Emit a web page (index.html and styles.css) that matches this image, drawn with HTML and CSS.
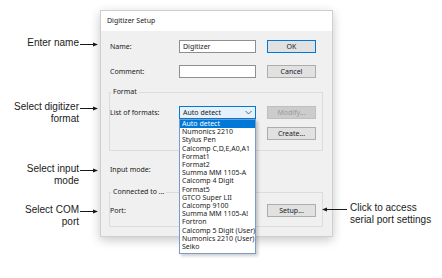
FILE: index.html
```html
<!DOCTYPE html>
<html lang="en">
<head>
    <meta charset="UTF-8">
    <title>Digitizer Setup</title>
    <link rel="stylesheet" href="styles.css">
</head>
<body>

<div class="page">
    <div class="callouts-left">
        <div class="callout callout-name">
            <span class="callout-text">Enter name</span>
            <svg class="arrow" width="20" height="12" viewBox="0 0 20 12"><line x1="0" y1="7.5" x2="15" y2="7.5" stroke="#1a1a1a" stroke-width="1"/><path d="M13 5.5 L18 7.5 L13 9.5 Z" fill="#1a1a1a"/></svg>
        </div>
        <div class="callout callout-format">
            <span class="callout-text">Select digitizer<br>format</span>
            <svg class="arrow" width="20" height="12" viewBox="0 0 20 12"><line x1="0" y1="7.5" x2="15" y2="7.5" stroke="#1a1a1a" stroke-width="1"/><path d="M13 5.5 L18 7.5 L13 9.5 Z" fill="#1a1a1a"/></svg>
        </div>
        <div class="callout callout-mode">
            <span class="callout-text">Select input<br>mode</span>
            <svg class="arrow" width="20" height="12" viewBox="0 0 20 12"><line x1="0" y1="7.5" x2="15" y2="7.5" stroke="#1a1a1a" stroke-width="1"/><path d="M13 5.5 L18 7.5 L13 9.5 Z" fill="#1a1a1a"/></svg>
        </div>
        <div class="callout callout-port">
            <span class="callout-text">Select COM<br>port</span>
            <svg class="arrow" width="20" height="12" viewBox="0 0 20 12"><line x1="0" y1="7.5" x2="15" y2="7.5" stroke="#1a1a1a" stroke-width="1"/><path d="M13 5.5 L18 7.5 L13 9.5 Z" fill="#1a1a1a"/></svg>
        </div>
    </div>

    <div class="dialog">
        <div class="titlebar">Digitizer Setup</div>
        <div class="dialog-body">
            <div class="row top-row">
                <label class="field-label">Name:</label>
                <div class="field">Digitizer</div>
                <button class="btn btn-default">OK</button>
            </div>
            <div class="row top-row comment-row">
                <label class="field-label">Comment:</label>
                <div class="field"></div>
                <button class="btn">Cancel</button>
            </div>

            <fieldset class="group format-group">
                <legend>Format</legend>
                <div class="row">
                    <label class="field-label">List of formats:</label>
                    <div class="select-wrap">
                        <div class="select">
                            <span>Auto detect</span>
                            <svg width="7" height="5" viewBox="0 0 7 5"><path d="M0.5 1 L3.5 4 L6.5 1" fill="none" stroke="#444" stroke-width="0.8"/></svg>
                        </div>
                        <ul class="dropdown">
                            <li class="selected">Auto detect</li>
                            <li>Numonics 2210</li>
                            <li>Stylus Pen</li>
                            <li>Calcomp C,D,E,A0,A1</li>
                            <li>Format1</li>
                            <li>Format2</li>
                            <li>Summa MM 1105-A</li>
                            <li>Calcomp 4 Digit</li>
                            <li>Format5</li>
                            <li>GTCO Super LII</li>
                            <li>Calcomp 9100</li>
                            <li>Summa MM 1105-A!</li>
                            <li>Fortron</li>
                            <li>Calcomp 5 Digit (User)</li>
                            <li>Numonics 2210 (User)</li>
                            <li>Seiko</li>
                        </ul>
                    </div>
                    <button class="btn" disabled>Modify...</button>
                </div>
                <div class="row create-row">
                    <button class="btn">Create...</button>
                </div>
            </fieldset>

            <div class="row mode-row">
                <label class="field-label">Input mode:</label>
            </div>

            <fieldset class="group port-group">
                <legend>Connected to ...</legend>
                <div class="row">
                    <label class="field-label">Port:</label>
                    <button class="btn">Setup...</button>
                </div>
            </fieldset>
        </div>
    </div>

    <div class="callouts-right">
        <div class="callout callout-setup">
            <svg class="arrow" width="25" height="12" viewBox="0 0 25 12"><line x1="4" y1="7.5" x2="25" y2="7.5" stroke="#1a1a1a" stroke-width="1"/><path d="M0 7.5 L5 5.5 L5 9.5 Z" fill="#1a1a1a"/></svg>
            <span class="callout-text">Click to access<br>serial port settings</span>
        </div>
    </div>
</div>

</body>
</html>
```

FILE: styles.css
```css
body {
    margin: 0;
    background-color: white;
    font-family: "Liberation Sans", Arial, sans-serif;
}
.page {
    display: flex;
    width: 442px;
    height: 278px;
    overflow: hidden;
}

/* callouts */
.callouts-left {
    width: 100px;
    flex-shrink: 0;
    display: flex;
    flex-direction: column;
    padding-top: 37px;
}
.callout {
    display: flex;
    align-items: flex-start;
    font-size: 10px;
    line-height: 12px;
    color: #1a1a1a;
}
.callouts-left .callout-text {
    width: 79px;
    text-align: right;
}
.callouts-left .arrow {
    margin-left: 1px;
}
.callout-format {
    margin-top: 52px;
}
.callout-mode {
    margin-top: 38px;
}
.callout-port {
    margin-top: 17px;
}
.callouts-right {
    flex: 1;
    padding-top: 202px;
    margin-left: -11px;
    position: relative;
    z-index: 2;
}
.callouts-right .callout-text {
    margin-left: 3px;
    white-space: nowrap;
}

/* dialog */
.dialog {
    width: 233px;
    height: 227px;
    margin-top: 10px;
    box-sizing: border-box;
    border: 1px solid #cfcfcf;
    background-color: #f0f0f0;
    box-shadow: 0 3px 10px rgba(0, 0, 0, 0.22);
    font-family: "Noto Sans", sans-serif;
    font-size: 7px;
    color: #1a1a1a;
    flex-shrink: 0;
}
.titlebar {
    height: 20px;
    line-height: 20px;
    padding-left: 6px;
    background-color: white;
    font-size: 7px;
}
.dialog-body {
    padding: 9px 9px 0 8px;
}
.row {
    display: flex;
    align-items: center;
    height: 13px;
}
.top-row {
    padding-left: 1px;
}
.comment-row {
    margin-top: 12px;
}
.field-label {
    width: 69px;
    flex-shrink: 0;
}
.field {
    width: 77px;
    height: 13px;
    box-sizing: border-box;
    border: 1px solid #8f8f8f;
    background-color: white;
    padding-left: 3px;
    line-height: 11px;
}
.btn {
    width: 49px;
    height: 13px;
    margin-left: auto;
    margin-right: 7px;
    padding: 0;
    box-sizing: border-box;
    border: 1px solid #adadad;
    background-color: #e1e1e1;
    font-family: "Noto Sans", sans-serif;
    font-size: 7px;
    color: #1a1a1a;
}
.btn-default {
    border-color: #0078d7;
}
.btn:disabled {
    background-color: #cccccc;
    border-color: #bfbfbf;
    color: #9a9a9a;
}

/* group boxes */
.group {
    margin: 0;
    border: 1px solid #dcdcdc;
    padding: 0;
    width: 214px;
    box-sizing: border-box;
}
.group legend {
    padding: 0 2px;
    margin-left: 1px;
    line-height: 10px;
}
.format-group {
    margin-top: 9px;
    padding: 9px 0 10px 0;
}
.create-row {
    margin-top: 8px;
}
.mode-row {
    margin-top: 12px;
    padding-left: 1px;
}
.port-group {
    margin-top: 11px;
    padding: 7px 0 9px 0;
}
.group .btn {
    margin-right: 6px;
}

/* select + open list */
.select-wrap {
    position: relative;
    width: 77px;
    height: 13px;
}
.select {
    display: flex;
    align-items: center;
    justify-content: space-between;
    height: 13px;
    box-sizing: border-box;
    border: 1px solid #0078d7;
    background-color: #e5f1fb;
    padding: 0 3px 0 3px;
}
.dropdown {
    position: absolute;
    top: 13px;
    left: 0;
    width: 77px;
    box-sizing: border-box;
    margin: 0;
    padding: 0 0 2px 0;
    list-style: none;
    background-color: white;
    border: 1px solid #7a9cc6;
    box-shadow: 2px 2px 3px rgba(0, 0, 0, 0.2);
    z-index: 3;
}
.dropdown li {
    line-height: 8.2px;
    padding-left: 2px;
    white-space: nowrap;
}
.dropdown li.selected {
    background-color: #0078d7;
    color: white;
}
```
